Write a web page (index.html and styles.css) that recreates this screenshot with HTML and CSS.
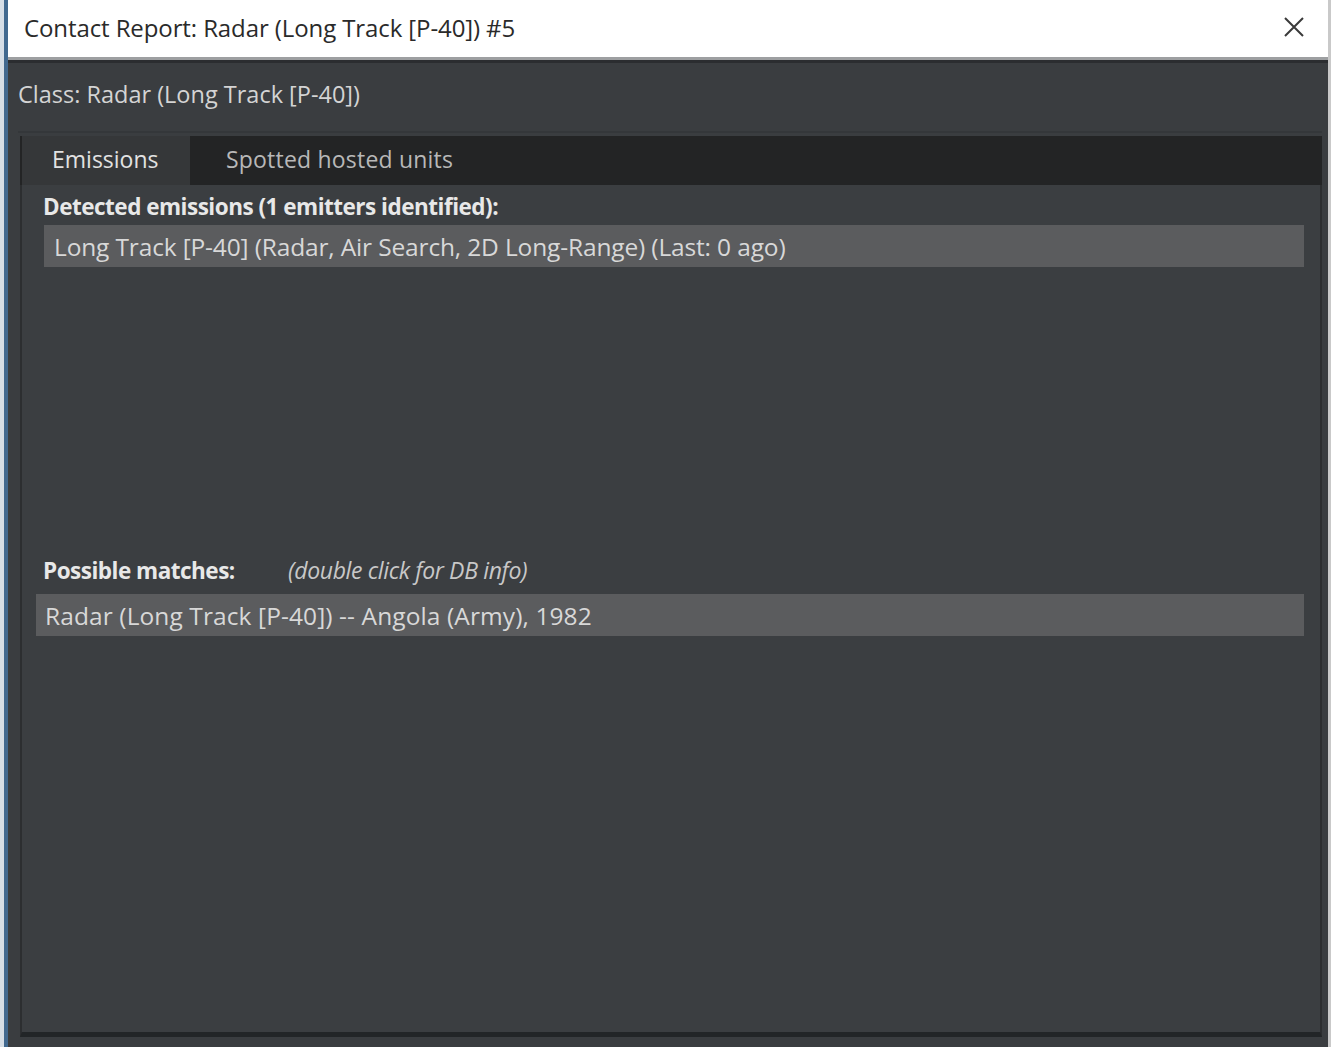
FILE: index.html
```html
<!DOCTYPE html>
<html>
<head>
<meta charset="utf-8">
<link rel="stylesheet" href="styles.css">
</head>
<body>
<div class="frame">
  <div class="edge-left"></div>
  <div class="window">
    <div class="titlebar">
      <span class="title">Contact Report: Radar (Long Track [P-40]) #5</span>
      <svg class="close" width="22" height="22" viewBox="0 0 22 22"><path d="M2 2 L20 20 M20 2 L2 20" stroke="#3a3a3a" stroke-width="2" fill="none"/></svg>
    </div>
    <div class="body">
      <div class="classline">Class: Radar (Long Track [P-40])</div>
      <div class="tabs">
        <div class="tab active">Emissions</div>
        <div class="tab">Spotted hosted units</div>
      </div>
      <div class="panel">
        <div class="label detected">Detected emissions (1 emitters identified):</div>
        <div class="row emission">Long Track [P-40] (Radar, Air Search, 2D Long-Range) (Last: 0 ago)</div>
        <div class="matches-head">
          <span class="label">Possible matches:</span>
          <span class="hint">(double click for DB info)</span>
        </div>
        <div class="row match">Radar (Long Track [P-40]) -- Angola (Army), 1982</div>
      </div>
    </div>
  </div>
  <div class="edge-right"></div>
</div>
</body>
</html>
```

FILE: styles.css
```css
html, body {
  margin: 0;
  padding: 0;
  width: 1331px;
  height: 1047px;
  overflow: hidden;
  background: #2a2c2e;
  font-family: "Open Sans", "Noto Sans", sans-serif;
}
.frame {
  display: flex;
  height: 1047px;
}
.edge-left {
  width: 4px;
  background: #d6dee6;
  border-right: 4px solid #42698f;
  flex: none;
}
.edge-right {
  width: 3px;
  background: #c9c9c9;
  flex: none;
}
.window {
  flex: 1;
  display: flex;
  flex-direction: column;
  min-width: 0;
}
.titlebar {
  height: 57px;
  background: #ffffff;
  border-bottom: 3px solid #9d9fa1;
  display: flex;
  align-items: center;
  justify-content: space-between;
  padding: 0 23px 0 16px;
  flex: none;
}
.title {
  font-size: 24px;
  color: #2a2a2a;
  letter-spacing: -0.1px;
  margin-top: -3px;
}
.close { display: block; margin-top: -3px; }
.body {
  flex: 1;
  background: #3a3d40;
  border-top: 3px solid #2b2d30;
  display: flex;
  flex-direction: column;
  padding: 0 6px 10px 12px;
}
.classline {
  height: 68px;
  display: flex;
  align-items: center;
  font-size: 23.5px;
  color: #d4d4d4;
  margin-left: -2px;
  margin-top: -3px;
  padding-bottom: 3px;
  border-bottom: 2px solid #34373a;
}
.tabs {
  margin-top: 3px;
  height: 49px;
  background: #232425;
  display: flex;
  align-items: stretch;
  padding-left: 2px;
}
.tab {
  display: flex;
  align-items: center;
  font-size: 23px;
  color: #b8b8b8;
  letter-spacing: 0.2px;
  padding: 0 28px 4px 36px;
}
.tab.active {
  background: #353739;
  color: #e2e2e2;
  width: 168px;
  padding-left: 30px;
  letter-spacing: 0;
  box-sizing: border-box;
}
.panel {
  flex: 1;
  background: #3b3e41;
  border-bottom: 5px solid #222527;
  border-left: 2px solid #2c2e30;
  border-right: 2px solid #2c2e30;
  display: flex;
  flex-direction: column;
  padding: 8px 16px 0 14px;
}
.label {
  font-size: 22.5px;
  font-weight: bold;
  color: #e8e8e8;
  letter-spacing: -0.5px;
}
.detected {
  margin-left: 7px;
  line-height: 28px;
}
.row {
  height: 42px;
  background: #5b5c5e;
  display: flex;
  align-items: center;
  font-size: 24.5px;
  color: #d8d8d8;
  letter-spacing: -0.15px;
}
.emission {
  margin-top: 4px;
  margin-left: 8px;
  padding-left: 10px;
}
.matches-head {
  margin-top: 289px;
  display: flex;
  align-items: baseline;
  padding-left: 7px;
  line-height: 28px;
}
.matches-head .label {
  width: 245px;
}
.hint {
  font-size: 23px;
  font-style: italic;
  color: #c8c8c8;
  letter-spacing: -0.35px;
}
.match {
  margin-top: 9px;
  padding-left: 9px;
  letter-spacing: 0.1px;
}
```
